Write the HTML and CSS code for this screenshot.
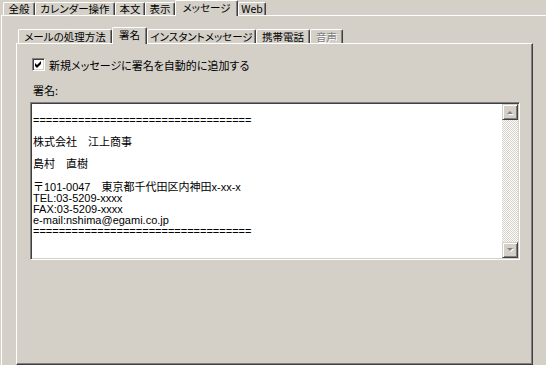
FILE: index.html
```html
<!DOCTYPE html>
<html lang="ja">
  <head>
    <meta charset="UTF-8" />
    <title>オプション - メッセージ</title>
    <link rel="stylesheet" href="styles.css">
  </head>
  <body>
    <div class="tabctl outer">
      <div class="tabs">
        <span class="tab tab-general">全般</span>
        <span class="tab tab-calendar">カレンダー操作</span>
        <span class="tab tab-body">本文</span>
        <span class="tab tab-view">表示</span>
        <span class="tab tab-message active">メッセージ</span>
        <span class="tab tab-web">Web</span>
      </div>
      <div class="panel outer-panel">
        <div class="tabctl inner">
          <div class="tabs">
            <span class="tab tab-mail">メールの処理方法</span>
            <span class="tab tab-sign active">署名</span>
            <span class="tab tab-im">インスタントメッセージ</span>
            <span class="tab tab-mobile">携帯電話</span>
            <span class="tab tab-voice disabled">音声</span>
          </div>
          <div class="panel inner-panel">
            <label class="check">
              <span class="box">
                <svg width="7" height="7" viewBox="0 0 7 7">
                  <path d="M0 2 L2 4 L6 0 L6 3 L2 7 L0 5 Z" fill="#000" />
                </svg>
              </span>
              新規メッセージに署名を自動的に追加する
            </label>
            <div class="sig-label">署名:</div>
            <div class="edit">
              <div class="edit-text">
==================================

株式会社　江上商事

島村　直樹

〒101-0047　東京都千代田区内神田x-xx-x
TEL:03-5209-xxxx
FAX:03-5209-xxxx
e-mail:nshima@egami.co.jp
==================================</div>
              <div class="scrollbar">
                <div class="sb-btn">
                  <svg width="7" height="5" viewBox="0 0 7 5">
                    <path d="M1 5 L4 2 L7 5 Z" fill="#fff" />
                    <path d="M0 4 L3 1 L6 4 Z" fill="#808080" />
                  </svg>
                </div>
                <div class="sb-track"></div>
                <div class="sb-btn">
                  <svg width="7" height="5" viewBox="0 0 7 5">
                    <path d="M1 1 L7 1 L4 4 Z" fill="#fff" />
                    <path d="M0 0 L6 0 L3 3 Z" fill="#808080" />
                  </svg>
                </div>
              </div>
            </div>
          </div>
        </div>
      </div>
    </div>
  </body>
</html>
```

FILE: styles.css
```css
body {
  margin: 0;
  width: 546px;
  height: 365px;
  overflow: hidden;
  background: #d4d0c8;
  color: #000;
  font-family: "Noto Sans CJK JP", sans-serif;
  font-size: 11px;
  font-feature-settings: "palt";
}
.tabctl.outer {
  margin-left: 1px;
}
.tabs {
  display: flex;
  align-items: flex-end;
  padding-left: 2px;
}
.outer > .tabs {
  height: 15px;
}
.inner > .tabs {
  height: 16px;
}
.tab {
  box-sizing: border-box;
  height: 13px;
  font-size: 10.5px;
  text-align: center;
  line-height: 12px;
  white-space: nowrap;
  background: #d4d0c8;
  border-top: 1px solid #fff;
  border-left: 1px solid #fff;
  border-right: 1px solid #404040;
  border-radius: 2px 2px 0 0;
  box-shadow: inset -1px 0 #808080;
}
.inner .tab {
  height: 14px;
  line-height: 13px;
}
.tab.active {
  position: relative;
  z-index: 1;
  height: 16px;
  margin-bottom: -1px;
  line-height: 13px;
}
.inner .tab.active {
  height: 17px;
  line-height: 14px;
}
.tab.disabled {
  color: #808080;
  text-shadow: 1px 1px #fff;
}
.tab-general { width: 32px; }
.tab-calendar { width: 80px; }
.tab-body { width: 30px; }
.tab-view { width: 30px; }
.tab-message { width: 63px; }
.tab-web { width: 28px; }
.tab-mail { width: 94px; }
.tab-sign { width: 35px; }
.tab-im { width: 109px; }
.tab-mobile { width: 54px; }
.tab-voice { width: 33px; }
.panel {
  border-top: 1px solid #fff;
  border-left: 1px solid #fff;
}
.outer-panel {
  box-sizing: border-box;
  height: 350px;
  padding: 11px 0 0 14px;
}
.inner-panel {
  box-sizing: border-box;
  width: 517px;
  height: 322px;
  padding: 14px 12px 0 13px;
  border-right: 1px solid #404040;
  border-bottom: 1px solid #404040;
  box-shadow: inset -1px -1px #808080;
}
.check {
  display: flex;
  align-items: center;
  gap: 4px;
  height: 13px;
  margin-left: 2px;
}
.box {
  box-sizing: border-box;
  width: 13px;
  height: 13px;
  display: flex;
  align-items: center;
  justify-content: center;
  background: #fff;
  border: 1px solid;
  border-color: #808080 #fff #fff #808080;
  box-shadow: inset 1px 1px #404040, inset -1px -1px #d4d0c8;
}
.sig-label {
  margin: 13px 0 0 3px;
  line-height: 13px;
}
.edit {
  box-sizing: border-box;
  display: flex;
  width: 490px;
  height: 158px;
  margin-top: 5px;
  padding: 1px;
  background: #fff;
  border: 1px solid;
  border-color: #808080 #fff #fff #808080;
  box-shadow: inset 1px 1px #404040, inset -1px -1px #d4d0c8;
}
.edit-text {
  flex: 1;
  padding-left: 1px;
  font-family: "Liberation Sans", "Noto Sans CJK JP", sans-serif;
  font-size: 11px;
  line-height: 11.1px;
  font-feature-settings: normal;
  white-space: pre;
  overflow: hidden;
}
.scrollbar {
  display: flex;
  flex-direction: column;
  width: 16px;
}
.sb-btn {
  box-sizing: border-box;
  height: 16px;
  display: flex;
  align-items: center;
  justify-content: center;
  background: #d4d0c8;
  border: 1px solid;
  border-color: #d4d0c8 #404040 #404040 #d4d0c8;
  box-shadow: inset 1px 1px #fff, inset -1px -1px #808080;
}
.sb-track {
  flex: 1;
  background-image: conic-gradient(#fff 25%, #d4d0c8 0 50%, #fff 0 75%, #d4d0c8 0);
  background-size: 2px 2px;
}
```
